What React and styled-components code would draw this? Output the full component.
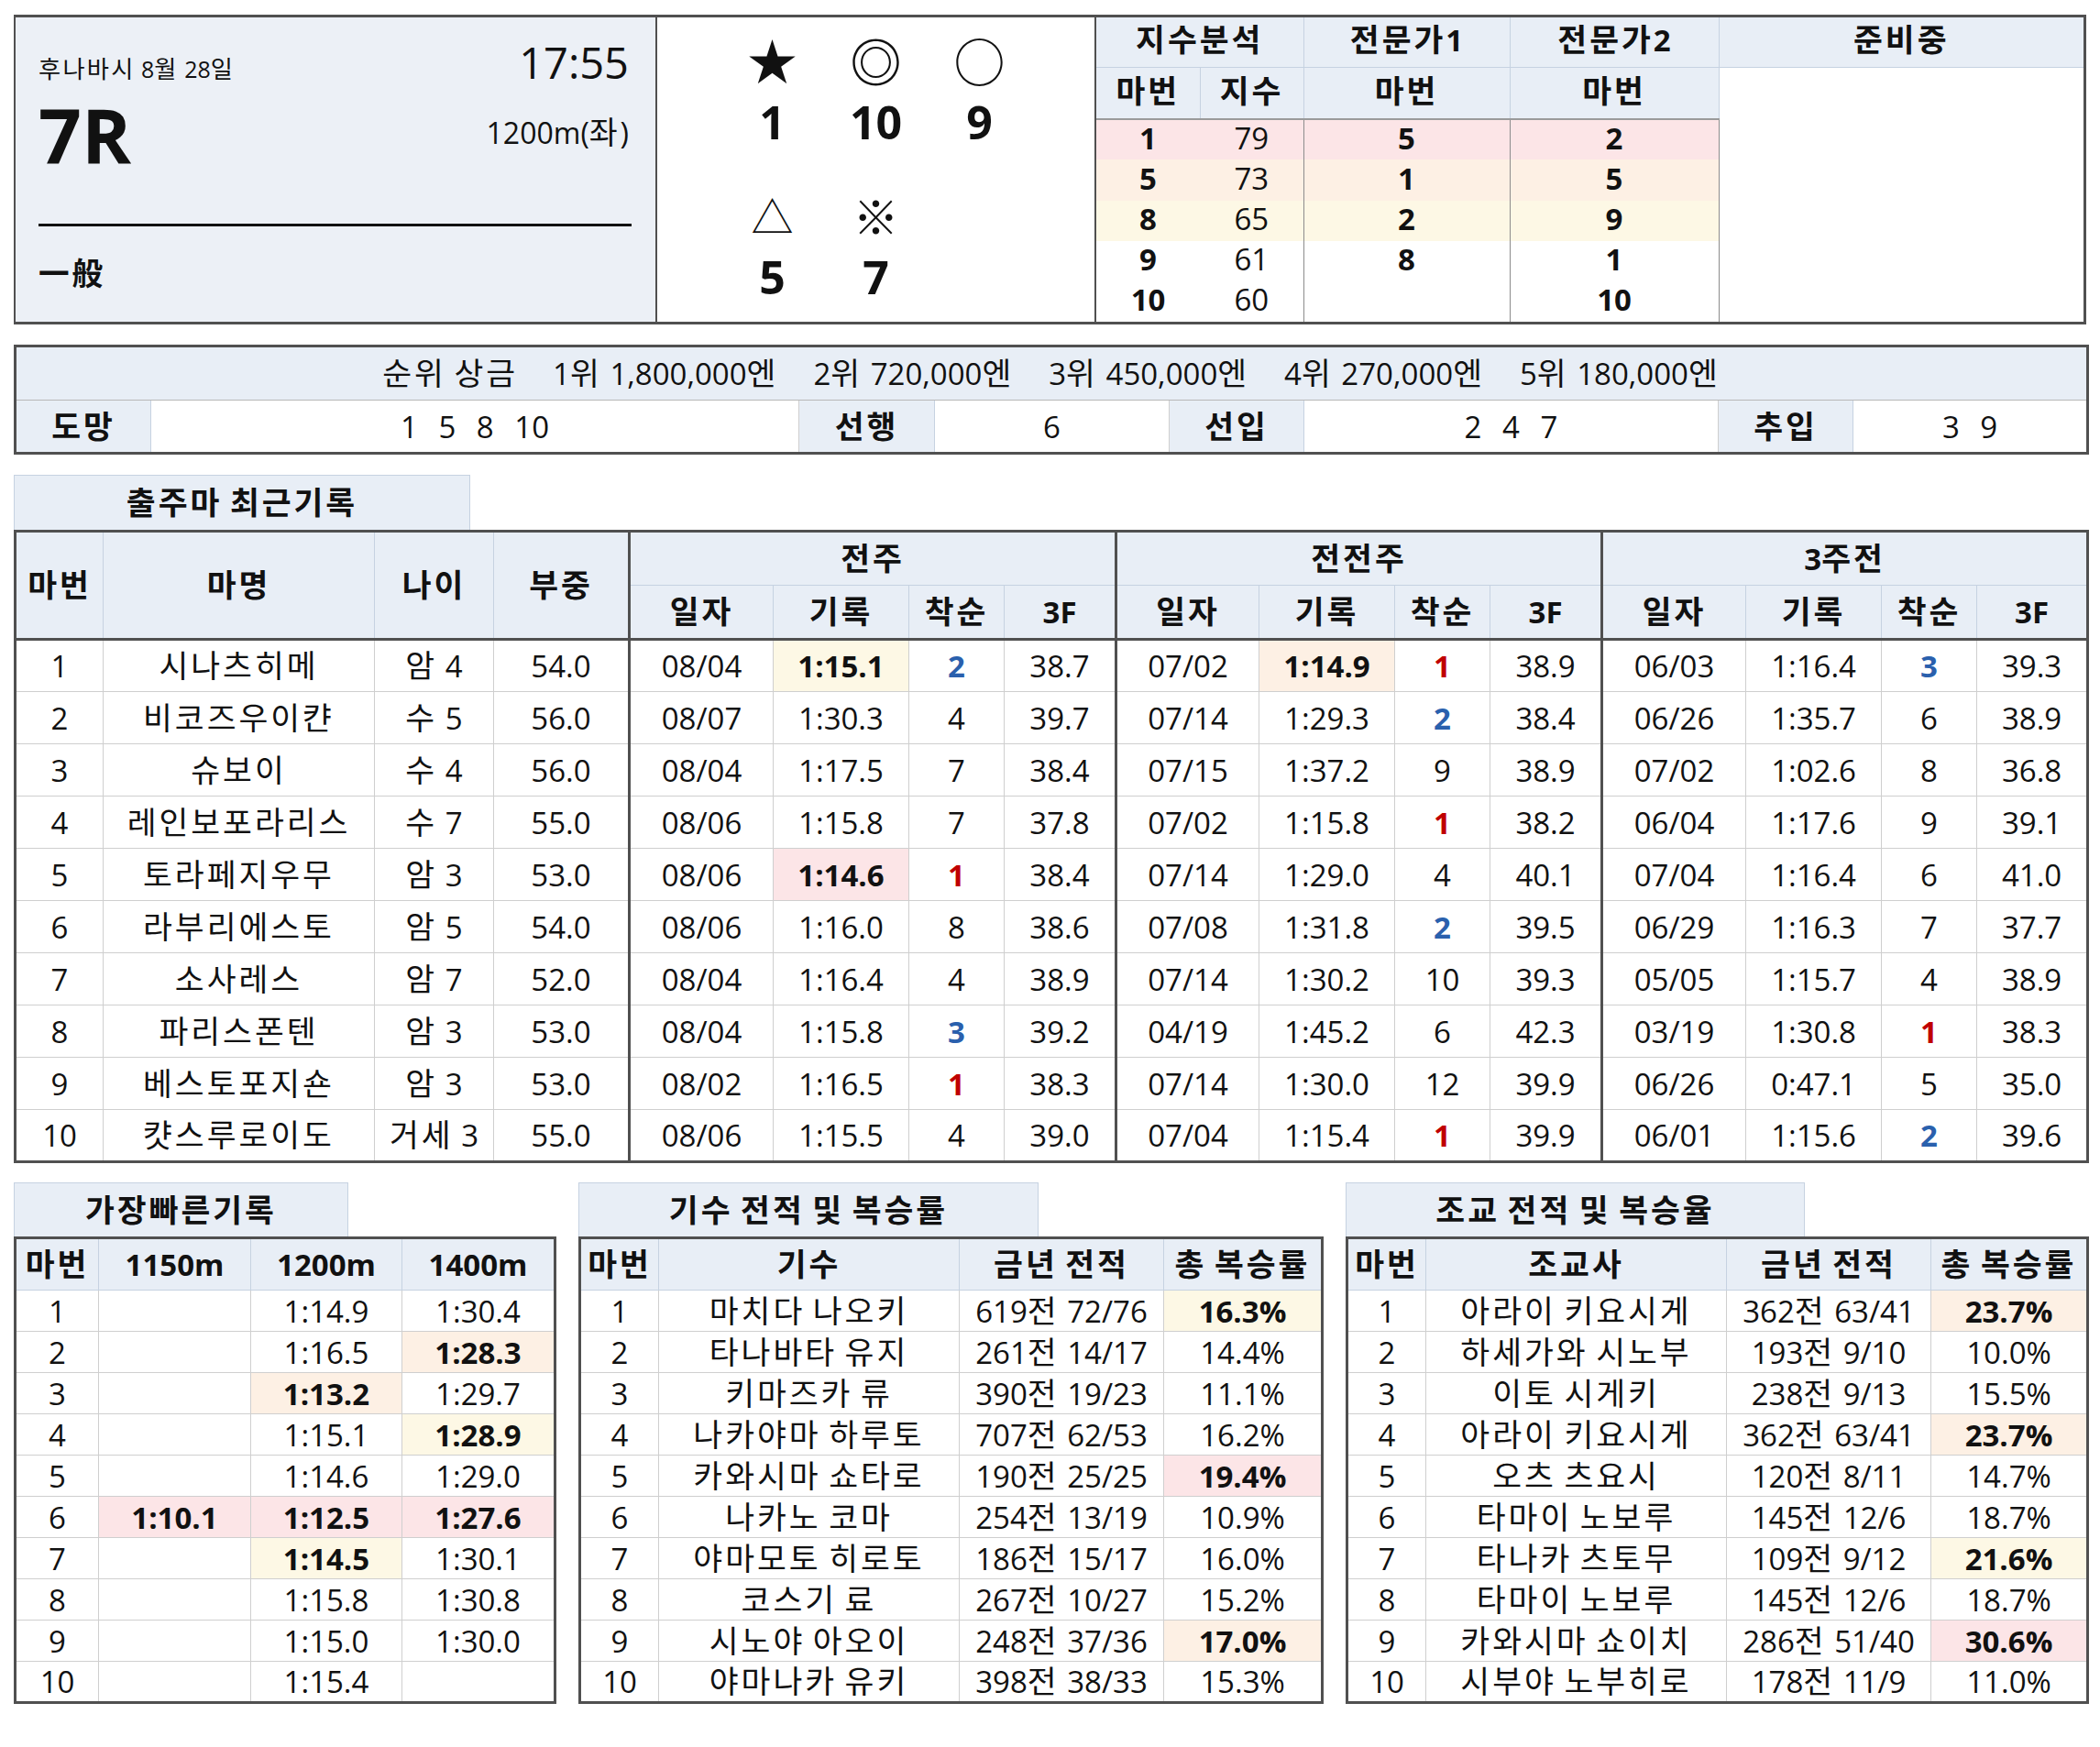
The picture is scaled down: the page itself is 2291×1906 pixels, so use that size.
import React from 'react';
import styled, { createGlobalStyle, css } from 'styled-components';

const FONT = `"Open Sans", "Noto Sans CJK KR", sans-serif`;
const DARK = '#505050';
const LINE = '#cfcfcf';
const HEAD_LINE = '#c6d2e1';
const HEAD_BG = '#e8eef6';
const PINK = '#fce5e7';
const PEACH = '#fdf0e4';
const YELLOW = '#fdf8e5';
const RED = '#c00000';
const BLUE = '#2a60ad';

const Global = createGlobalStyle`
  html, body { margin: 0; padding: 0; background: #fff; }
  body { font-family: ${FONT}; color: #111; }
  * { box-sizing: border-box; }
`;

const Page = styled.div`
  width: 2291px;
  padding: 16px 15px 40px 15px;
  display: flex;
  flex-direction: column;
`;

/* Korean runs are set a little wider, as in the original sheet */
const Hangul = styled.span`
  font-size: 1.05em;
  letter-spacing: 0.085em;
`;

const HANGUL_RE = /([\u3131-\u318E\uAC00-\uD7A3\u4E00-\u9FFF]+)/;

function T({ children }) {
  if (typeof children !== 'string') return children ?? null;
  return children
    .split(HANGUL_RE)
    .map((part, i) => (i % 2 === 1 ? <Hangul key={i}>{part}</Hangul> : part));
}

/* ---------- top box ---------- */
const TopBox = styled.section`
  display: flex;
  height: 338px;
  border: 3px solid ${DARK};
  border-left-width: 2px;
`;

const InfoPanel = styled.div`
  flex: 0 0 698px;
  background: #ecf0f6;
  padding: 26px 26px 0 25px;
  display: flex;
  flex-direction: column;
`;

const InfoRow = styled.div`
  display: flex;
  justify-content: space-between;
  align-items: ${(p) => p.$align || 'flex-end'};
`;

const DateText = styled.span`
  font-size: 25px;
  line-height: 1;
  padding-bottom: 4px;
`;

const TimeText = styled.span`
  font-size: 47px;
  line-height: 1;
  margin-right: 3px;
`;

const RaceNo = styled.span`
  font-size: 82px;
  font-weight: 700;
  line-height: 1;
  margin-top: 14px;
`;

const Distance = styled.span`
  font-size: 32px;
  line-height: 1;
  margin-right: 3px;
  margin-top: 10px;
`;

const Rule = styled.div`
  height: 3px;
  background: #111;
  margin-top: 56px;
`;

const Grade = styled.span`
  font-size: 32px;
  font-weight: 700;
  line-height: 1;
  margin-top: 33px;
  font-family: "Noto Sans CJK KR", sans-serif;
`;

const SymbolPanel = styled.div`
  flex: 0 0 481px;
  border-left: 2px solid ${DARK};
  border-right: 2px solid ${DARK};
  padding-top: 12px;
  display: flex;
  flex-direction: column;
  align-items: center;
  gap: 33px;
`;

const SymbolGrid = styled.div`
  display: grid;
  grid-template-columns: repeat(3, 113px);
  grid-auto-rows: 68px;
  align-items: center;
  justify-items: center;
`;

const Mark = styled.span`
  font-family: "Noto Sans CJK KR", sans-serif;
  font-size: ${(p) => p.$size || 52}px;
  font-weight: ${(p) => p.$weight || 400};
  line-height: 68px;
`;

const Pick = styled.span`
  font-size: 50px;
  font-weight: 700;
  line-height: 68px;
`;

/* ---------- generic tables ---------- */
const cellBase = css`
  padding: 0;
  text-align: center;
  vertical-align: middle;
  line-height: 1;
  font-size: 33px;
  white-space: nowrap;
`;

const Table = styled.table`
  border-collapse: collapse;
  table-layout: fixed;
  width: ${(p) => p.$w}px;
  border: 3px solid ${DARK};
`;

const Th = styled.th`
  ${cellBase};
  font-weight: 700;
  background: ${HEAD_BG};
  border: 1px solid ${HEAD_LINE};
  height: ${(p) => p.$h}px;
  ${(p) => p.$thickLeft && css`border-left: 3px solid ${DARK};`}
  ${(p) => p.$thickBottom && css`border-bottom: 3px solid ${DARK};`}
`;

const Td = styled.td`
  ${cellBase};
  font-weight: ${(p) => (p.$bold ? 700 : 400)};
  color: ${(p) => p.$color || '#111'};
  background: ${(p) => p.$bg || '#fff'};
  border: 1px solid ${LINE};
  height: ${(p) => p.$h}px;
  ${(p) => p.$thickLeft && css`border-left: 3px solid ${DARK};`}
`;

/* ---------- top-right index table ---------- */
const IndexTable = styled.table`
  flex: 1;
  height: 100%;
  border-collapse: collapse;
  table-layout: fixed;
  border-style: hidden;
`;

const IxHead = styled.th`
  ${cellBase};
  font-weight: 700;
  background: ${HEAD_BG};
  border: 1px solid ${HEAD_LINE};
  height: ${(p) => p.$h}px;
  padding-bottom: 5px;
  ${(p) => p.$rowTwo && css`border-bottom: 2px solid #9a9a9a;`}
`;

const IxCell = styled.td`
  ${cellBase};
  font-weight: ${(p) => (p.$bold ? 700 : 400)};
  background: ${(p) => p.$bg || '#fff'};
  border: none;
  padding-bottom: 5px;
  ${(p) => p.$divider && css`border-left: 1px solid #8c8c8c;`}
  height: 44px;
`;

const IxBlank = styled.td`
  background: #fff;
  border-left: 1px solid #8c8c8c;
`;

/* ---------- prize table ---------- */
const PrizeLine = styled.td`
  ${cellBase};
  background: ${HEAD_BG};
  border-bottom: 1px solid #b8b8b8;
  height: 59px;
`;

const PrizeItem = styled.span`
  margin-left: ${(p) => (p.$first ? 0 : 38)}px;
`;

const Nums = styled.span`
  word-spacing: 14px;
`;

/* ---------- section captions ---------- */
const Caption = styled.div`
  width: ${(p) => p.$w}px;
  height: ${(p) => p.$h || 59}px;
  background: ${HEAD_BG};
  border: 1px solid ${HEAD_LINE};
  border-bottom: none;
  display: flex;
  align-items: center;
  justify-content: center;
  font-size: 33px;
  font-weight: 700;
  line-height: 1;
`;

const CaptionText = styled.span`
  white-space: pre;
`;

const Section = styled.section`
  margin-top: ${(p) => p.$mt}px;
  display: flex;
  flex-direction: column;
`;

const BottomRow = styled.div`
  margin-top: 21px;
  display: flex;
  justify-content: space-between;
  align-items: flex-start;
`;

const Block = styled.div`
  width: ${(p) => p.$w}px;
  display: flex;
  flex-direction: column;
`;

/* ---------- data ---------- */
const indexRows = [
  { c: ['1', '79', '5', '2'], bg: PINK },
  { c: ['5', '73', '1', '5'], bg: PEACH },
  { c: ['8', '65', '2', '9'], bg: YELLOW },
  { c: ['9', '61', '8', '1'] },
  { c: ['10', '60', '', '10'] },
];

const horses = [
  ['1', '시나츠히메', '암 4', '54.0', [['08/04', '1:15.1', '2', '38.7', YELLOW], ['07/02', '1:14.9', '1', '38.9', PEACH], ['06/03', '1:16.4', '3', '39.3']]],
  ['2', '비코즈우이캰', '수 5', '56.0', [['08/07', '1:30.3', '4', '39.7'], ['07/14', '1:29.3', '2', '38.4'], ['06/26', '1:35.7', '6', '38.9']]],
  ['3', '슈보이', '수 4', '56.0', [['08/04', '1:17.5', '7', '38.4'], ['07/15', '1:37.2', '9', '38.9'], ['07/02', '1:02.6', '8', '36.8']]],
  ['4', '레인보포라리스', '수 7', '55.0', [['08/06', '1:15.8', '7', '37.8'], ['07/02', '1:15.8', '1', '38.2'], ['06/04', '1:17.6', '9', '39.1']]],
  ['5', '토라페지우무', '암 3', '53.0', [['08/06', '1:14.6', '1', '38.4', PINK], ['07/14', '1:29.0', '4', '40.1'], ['07/04', '1:16.4', '6', '41.0']]],
  ['6', '라부리에스토', '암 5', '54.0', [['08/06', '1:16.0', '8', '38.6'], ['07/08', '1:31.8', '2', '39.5'], ['06/29', '1:16.3', '7', '37.7']]],
  ['7', '소사레스', '암 7', '52.0', [['08/04', '1:16.4', '4', '38.9'], ['07/14', '1:30.2', '10', '39.3'], ['05/05', '1:15.7', '4', '38.9']]],
  ['8', '파리스폰텐', '암 3', '53.0', [['08/04', '1:15.8', '3', '39.2'], ['04/19', '1:45.2', '6', '42.3'], ['03/19', '1:30.8', '1', '38.3']]],
  ['9', '베스토포지숀', '암 3', '53.0', [['08/02', '1:16.5', '1', '38.3'], ['07/14', '1:30.0', '12', '39.9'], ['06/26', '0:47.1', '5', '35.0']]],
  ['10', '캿스루로이도', '거세 3', '55.0', [['08/06', '1:15.5', '4', '39.0'], ['07/04', '1:15.4', '1', '39.9'], ['06/01', '1:15.6', '2', '39.6']]],
];

const fastest = [
  [['', null], ['1:14.9', null], ['1:30.4', null]],
  [['', null], ['1:16.5', null], ['1:28.3', PEACH]],
  [['', null], ['1:13.2', PEACH], ['1:29.7', null]],
  [['', null], ['1:15.1', null], ['1:28.9', YELLOW]],
  [['', null], ['1:14.6', null], ['1:29.0', null]],
  [['1:10.1', PINK], ['1:12.5', PINK], ['1:27.6', PINK]],
  [['', null], ['1:14.5', YELLOW], ['1:30.1', null]],
  [['', null], ['1:15.8', null], ['1:30.8', null]],
  [['', null], ['1:15.0', null], ['1:30.0', null]],
  [['', null], ['1:15.4', null], ['', null]],
];

const jockeys = [
  ['마치다 나오키', '619전 72/76', '16.3%', YELLOW],
  ['타나바타 유지', '261전 14/17', '14.4%'],
  ['키마즈카 류', '390전 19/23', '11.1%'],
  ['나카야마 하루토', '707전 62/53', '16.2%'],
  ['카와시마 쇼타로', '190전 25/25', '19.4%', PINK],
  ['나카노 코마', '254전 13/19', '10.9%'],
  ['야마모토 히로토', '186전 15/17', '16.0%'],
  ['코스기 료', '267전 10/27', '15.2%'],
  ['시노야 아오이', '248전 37/36', '17.0%', PEACH],
  ['야마나카 유키', '398전 38/33', '15.3%'],
];

const trainers = [
  ['아라이 키요시게', '362전 63/41', '23.7%', PEACH],
  ['하세가와 시노부', '193전 9/10', '10.0%'],
  ['이토 시게키', '238전 9/13', '15.5%'],
  ['아라이 키요시게', '362전 63/41', '23.7%', PEACH],
  ['오츠 츠요시', '120전 8/11', '14.7%'],
  ['타마이 노보루', '145전 12/6', '18.7%'],
  ['타나카 츠토무', '109전 9/12', '21.6%', YELLOW],
  ['타마이 노보루', '145전 12/6', '18.7%'],
  ['카와시마 쇼이치', '286전 51/40', '30.6%', PINK],
  ['시부야 노부히로', '178전 11/9', '11.0%'],
];

const prizes = ['1위 1,800,000엔', '2위 720,000엔', '3위 450,000엔', '4위 270,000엔', '5위 180,000엔'];

const rankColor = (r) => (r === '1' ? RED : r === '2' || r === '3' ? BLUE : null);

const Cols = ({ widths }) => (
  <colgroup>
    {widths.map((w, i) => (
      <col key={i} style={{ width: w }} />
    ))}
  </colgroup>
);

function SectionCaption({ w, h, text }) {
  return (
    <Caption $w={w} $h={h}>
      <CaptionText>
        <T>{text}</T>
      </CaptionText>
    </Caption>
  );
}

function StatsTable({ kind, rows }) {
  const jockey = kind === 'jockey';
  const w = jockey ? 810 : 808;
  return (
    <Block $w={w}>
      <SectionCaption w={jockey ? 502 : 501} text={jockey ? '기수 전적 및 복승률' : '조교 전적 및 복승율'} />
      <Table $w={w}>
        <Cols widths={jockey ? [86, 328, 223, 173] : [86, 328, 223, 171]} />
        <thead>
          <tr>
            <Th $h={57}><T>마번</T></Th>
            <Th $h={57}><T>{jockey ? '기수' : '조교사'}</T></Th>
            <Th $h={57}><T>금년 전적</T></Th>
            <Th $h={57}><T>총 복승률</T></Th>
          </tr>
        </thead>
        <tbody>
          {rows.map((r, i) => (
            <tr key={i}>
              <Td $h={45}>{i + 1}</Td>
              <Td $h={45}><T>{r[0]}</T></Td>
              <Td $h={45}><T>{r[1]}</T></Td>
              <Td $h={45} $bg={r[3]} $bold={!!r[3]}>{r[2]}</Td>
            </tr>
          ))}
        </tbody>
      </Table>
    </Block>
  );
}

export default function App() {
  return (
    <>
      <Global />
      <Page>
        <TopBox>
          <InfoPanel>
            <InfoRow>
              <DateText><T>후나바시 8월 28일</T></DateText>
              <TimeText>17:55</TimeText>
            </InfoRow>
            <InfoRow $align="center">
              <RaceNo>7R</RaceNo>
              <Distance><T>1200m(좌)</T></Distance>
            </InfoRow>
            <Rule />
            <InfoRow>
              <Grade><T>一般</T></Grade>
            </InfoRow>
          </InfoPanel>
          <SymbolPanel>
            <SymbolGrid>
              <Mark $size={54}>★</Mark>
              <Mark $size={56} $weight={700}>◎</Mark>
              <Mark $size={56}>○</Mark>
              <Pick>1</Pick>
              <Pick>10</Pick>
              <Pick>9</Pick>
            </SymbolGrid>
            <SymbolGrid>
              <Mark $size={46}>△</Mark>
              <Mark $size={50} $weight={700}>※</Mark>
              <span />
              <Pick>5</Pick>
              <Pick>7</Pick>
              <span />
            </SymbolGrid>
          </SymbolPanel>
          <IndexTable>
            <Cols widths={[113, 113, 225, 228, 398]} />
            <tbody>
              <tr>
                <IxHead $h={54} colSpan={2}><T>지수분석</T></IxHead>
                <IxHead $h={54}><T>전문가1</T></IxHead>
                <IxHead $h={54}><T>전문가2</T></IxHead>
                <IxHead $h={54}><T>준비중</T></IxHead>
              </tr>
              <tr>
                <IxHead $h={57} $rowTwo><T>마번</T></IxHead>
                <IxHead $h={57} $rowTwo><T>지수</T></IxHead>
                <IxHead $h={57} $rowTwo><T>마번</T></IxHead>
                <IxHead $h={57} $rowTwo><T>마번</T></IxHead>
                <IxBlank rowSpan={6} />
              </tr>
              {indexRows.map((r, i) => (
                <tr key={i}>
                  <IxCell $bg={r.bg} $bold>{r.c[0]}</IxCell>
                  <IxCell $bg={r.bg}>{r.c[1]}</IxCell>
                  <IxCell $bg={r.bg} $bold $divider>{r.c[2]}</IxCell>
                  <IxCell $bg={r.bg} $bold $divider>{r.c[3]}</IxCell>
                </tr>
              ))}
            </tbody>
          </IndexTable>
        </TopBox>

        <Section $mt={22}>
          <Table $w={2261}>
            <Cols widths={[148, 707, 148, 256, 147, 452, 147, 256]} />
            <tbody>
              <tr>
                <PrizeLine colSpan={8}>
                  <PrizeItem $first><T>순위 상금</T></PrizeItem>
                  {prizes.map((p) => (
                    <PrizeItem key={p}><T>{p}</T></PrizeItem>
                  ))}
                </PrizeLine>
              </tr>
              <tr>
                <Th $h={58}><T>도망</T></Th>
                <Td $h={58}><Nums>1 5 8 10</Nums></Td>
                <Th $h={58}><T>선행</T></Th>
                <Td $h={58}><Nums>6</Nums></Td>
                <Th $h={58}><T>선입</T></Th>
                <Td $h={58}><Nums>2 4 7</Nums></Td>
                <Th $h={58}><T>추입</T></Th>
                <Td $h={58}><Nums>3 9</Nums></Td>
              </tr>
            </tbody>
          </Table>
        </Section>

        <Section $mt={22}>
          <SectionCaption w={498} h={60} text="출주마 최근기록" />
          <Table $w={2261}>
            <Cols widths={[96, 296, 130, 148, 157, 148, 104, 122, 156, 148, 104, 122, 157, 148, 104, 121]} />
            <thead>
              <tr>
                <Th $h={59} rowSpan={2} $thickBottom><T>마번</T></Th>
                <Th $h={59} rowSpan={2} $thickBottom><T>마명</T></Th>
                <Th $h={59} rowSpan={2} $thickBottom><T>나이</T></Th>
                <Th $h={59} rowSpan={2} $thickBottom><T>부중</T></Th>
                <Th $h={59} colSpan={4} $thickLeft><T>전주</T></Th>
                <Th $h={59} colSpan={4} $thickLeft><T>전전주</T></Th>
                <Th $h={59} colSpan={4} $thickLeft><T>3주전</T></Th>
              </tr>
              <tr>
                {[0, 1, 2].map((g) =>
                  ['일자', '기록', '착순', '3F'].map((h, j) => (
                    <Th key={`${g}-${h}`} $h={59} $thickBottom $thickLeft={j === 0}>
                      <T>{h}</T>
                    </Th>
                  ))
                )}
              </tr>
            </thead>
            <tbody>
              {horses.map((h) => (
                <tr key={h[0]}>
                  <Td $h={57}>{h[0]}</Td>
                  <Td $h={57}><T>{h[1]}</T></Td>
                  <Td $h={57}><T>{h[2]}</T></Td>
                  <Td $h={57}>{h[3]}</Td>
                  {h[4].map((g, gi) => (
                    <React.Fragment key={gi}>
                      <Td $h={57} $thickLeft>{g[0]}</Td>
                      <Td $h={57} $bg={g[4]} $bold={!!g[4]}>{g[1]}</Td>
                      <Td $h={57} $color={rankColor(g[2])} $bold={!!rankColor(g[2])}>{g[2]}</Td>
                      <Td $h={57}>{g[3]}</Td>
                    </React.Fragment>
                  ))}
                </tr>
              ))}
            </tbody>
          </Table>
        </Section>

        <BottomRow>
          <Block $w={589}>
            <SectionCaption w={365} text="가장빠른기록" />
            <Table $w={589}>
              <Cols widths={[91, 166, 165, 167]} />
              <thead>
                <tr>
                  <Th $h={57}><T>마번</T></Th>
                  <Th $h={57}>1150m</Th>
                  <Th $h={57}>1200m</Th>
                  <Th $h={57}>1400m</Th>
                </tr>
              </thead>
              <tbody>
                {fastest.map((r, i) => (
                  <tr key={i}>
                    <Td $h={45}>{i + 1}</Td>
                    {r.map((c, j) => (
                      <Td key={j} $h={45} $bg={c[1]} $bold={!!c[1]}>
                        {c[0]}
                      </Td>
                    ))}
                  </tr>
                ))}
              </tbody>
            </Table>
          </Block>
          <StatsTable kind="jockey" rows={jockeys} />
          <StatsTable kind="trainer" rows={trainers} />
        </BottomRow>
      </Page>
    </>
  );
}
